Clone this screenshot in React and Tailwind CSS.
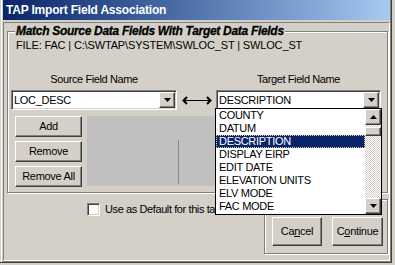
import React from "react";

const raised =
  "border border-t-white border-l-white border-r-[#404040] border-b-[#404040] shadow-[inset_-1px_-1px_0_#808080] bg-[#d4d0c8]";
const sunken =
  "border border-t-[#808080] border-l-[#808080] border-r-white border-b-white shadow-[inset_1px_1px_0_#404040,inset_-1px_-1px_0_#d4d0c8]";
const etched =
  "border border-[#808080] shadow-[inset_1px_1px_0_#fff,1px_1px_0_#fff]";

function Tri({ up }) {
  return (
    <svg width="7" height="4" viewBox="0 0 7 4">
      <path d={up ? "M3.5 0 L7 4 L0 4 Z" : "M0 0 L7 0 L3.5 4 Z"} fill="#000" />
    </svg>
  );
}

function DropButton() {
  return (
    <div className={`${raised} w-[16px] h-[16px] flex items-center justify-center`}>
      <Tri />
    </div>
  );
}

function Combo({ value, width, children }) {
  return (
    <div className={`relative ${sunken} bg-white h-[20px] flex items-center`} style={{ width }}>
      <span className="flex-1 pl-[2px] leading-[13px]">{value}</span>
      <div className="mr-[1px]">
        <DropButton />
      </div>
      {children}
    </div>
  );
}

function Btn({ children, className = "" }) {
  return (
    <div className={`${raised} flex items-center justify-center leading-[13px] ${className}`}>
      {children}
    </div>
  );
}

const items = [
  "COUNTY",
  "DATUM",
  "DESCRIPTION",
  "DISPLAY EIRP",
  "EDIT DATE",
  "ELEVATION UNITS",
  "ELV MODE",
  "FAC MODE",
];

function DropList() {
  return (
    <div className="absolute left-[-2px] top-[17px] z-10 w-[167px] h-[107px] border border-black bg-white flex">
      <div className="flex-1">
        {items.map((it) => (
          <div
            key={it}
            className={`h-[13px] leading-[11px] pl-[2px] border border-dotted ${
              it === "DESCRIPTION"
                ? "bg-[#0a246a] text-white border-[#d8d4a0]"
                : "border-transparent"
            }`}
          >
            {it}
          </div>
        ))}
      </div>
      <div className="w-[16px] flex flex-col bg-[repeating-conic-gradient(#fff_0_25%,#d4d0c8_0_50%)] bg-[length:2px_2px]">
        <div className={`${raised} h-[16px] flex items-center justify-center`}>
          <Tri up />
        </div>
        <div className={`${raised} h-[9px] mt-[2px]`} />
        <div className="flex-1" />
        <div className={`${raised} h-[16px] flex items-center justify-center`}>
          <Tri />
        </div>
      </div>
    </div>
  );
}

export default function App() {
  return (
    <div className="w-[395px] h-[265px] bg-[#d4d0c8] overflow-hidden text-black text-[11px] tracking-[-0.3px] font-['Liberation_Sans',Arial,sans-serif]">
      <div className="w-[392px] h-[263px] flex flex-col pl-[3px] pr-[1px] pb-[1px] border-r border-b border-[#404040] shadow-[inset_1px_0_0_#d4d0c8,inset_2px_0_0_#fff,inset_-1px_-1px_0_#808080]">
        {/* Title bar */}
        <div className="h-[20px] shrink-0 flex items-center pl-[3px] bg-linear-to-r from-[#0a246a] to-[#a6caf0] text-white font-bold text-[12px] tracking-[-0.2px]">
          TAP Import Field Association
        </div>

        {/* Body */}
        <div className="mt-[2px] flex-1 border border-t-[#808080] border-l-[#808080] border-r-white border-b-white pl-[3px] pt-[8px]">
          {/* Group box */}
          <div className={`relative w-[381px] h-[162px] ${etched}`}>
            <div className="absolute -top-[7px] left-[7px] px-[1px] bg-[#d4d0c8] font-bold italic text-[12px] leading-[13px] tracking-[-0.3px] [-webkit-text-stroke:0.3px_#000]">
              Match Source Data Fields With Target Data Fields
            </div>

            <div className="ml-[8px] mt-[7px] h-[13px] leading-[13px] tracking-[-0.15px]">
              FILE: FAC | C:\SWTAP\SYSTEM\SWLOC_ST | SWLOC_ST
            </div>

            <div className="flex mt-[21px] h-[13px] leading-[13px] tracking-[-0.4px]">
              <div className="ml-[3px] w-[166px] text-center">Source Field Name</div>
              <div className="w-[39px]" />
              <div className="w-[165px] text-center">Target Field Name</div>
            </div>

            <div className="flex mt-[4px] ml-[3px] h-[20px]">
              <Combo value="LOC_DESC" width={166} />
              <div className="w-[39px] flex items-center">
                <svg className="ml-[5px]" width="30" height="9" viewBox="0 0 30 9">
                  <path d="M5 1 L1.5 4.5 L5 8" stroke="#000" strokeWidth="2" fill="none" />
                  <line x1="2" y1="4.5" x2="28" y2="4.5" stroke="#000" strokeWidth="1" />
                  <path d="M25 1 L28.5 4.5 L25 8" stroke="#000" strokeWidth="2" fill="none" />
                </svg>
              </div>
              <Combo value="DESCRIPTION" width={165}>
                <DropList />
              </Combo>
            </div>

            <div className="flex mt-[6px]">
              <div className="ml-[7px] w-[67px] flex flex-col gap-[4px]">
                <Btn className="h-[21px]">Add</Btn>
                <Btn className="h-[21px]">Remove</Btn>
                <Btn className="h-[21px]">Remove All</Btn>
              </div>
              <div className="ml-[5px] w-[294px] h-[70px] bg-[#c0c0c0] flex">
                <div className="ml-[91px] mt-[24px] mb-[2px] w-px bg-[#8a8a8a]" />
              </div>
            </div>
          </div>

          {/* Lower row */}
          <div className="flex mt-[6px]">
            <div className="w-[257px] flex items-start">
              <div className="ml-[80px] mt-[4px] flex items-center gap-[5px]">
                <div className={`w-[13px] h-[13px] shrink-0 bg-white ${sunken}`} />
                <span className="whitespace-nowrap leading-[13px] tracking-[-0.4px]">
                  Use as Default for this table
                </span>
              </div>
            </div>
            <div className={`w-[124px] h-[55px] ${etched} flex items-start pt-[17px] pl-[7px] gap-[10px]`}>
              <Btn className="w-[50px] h-[29px]">
                Ca<u>n</u>cel
              </Btn>
              <Btn className="w-[51px] h-[29px]">
                C<u>o</u>ntinue
              </Btn>
            </div>
          </div>
        </div>
      </div>
    </div>
  );
}
